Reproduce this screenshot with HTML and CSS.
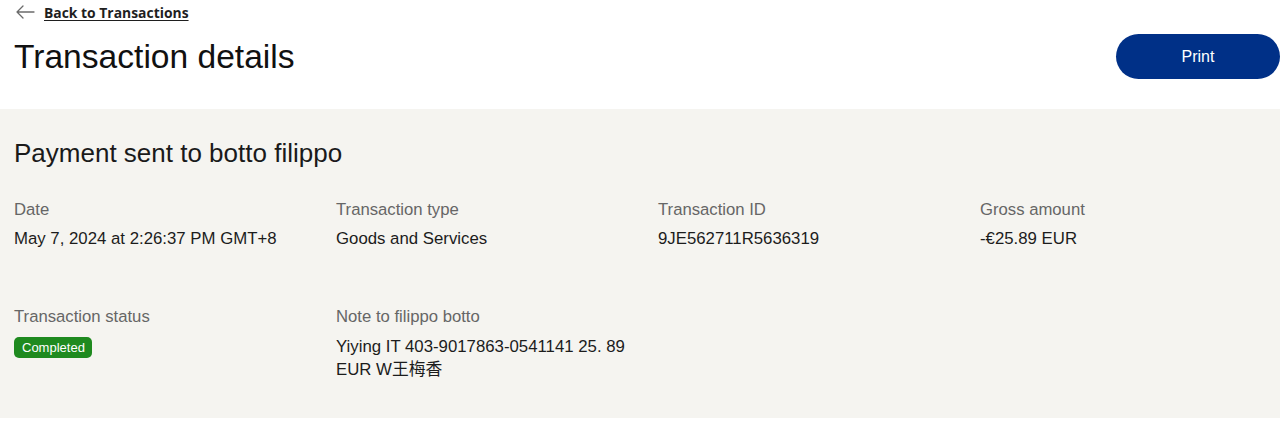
FILE: index.html
```html
<!DOCTYPE html>
<html lang="en">
<head>
<meta charset="utf-8">
<title>Transaction details</title>
<link rel="stylesheet" href="styles.css">
</head>
<body>
<header class="page-head">
  <a class="back" href="#">
    <svg class="back-icon" width="20" height="14" viewBox="0 0 20 14" aria-hidden="true">
      <path d="M19 7H2M8 1L2 7l6 6" fill="none" stroke="#6b6b6b" stroke-width="1.3" stroke-linecap="round" stroke-linejoin="round"/>
    </svg>
    <span class="back-text">Back to Transactions</span>
  </a>
  <div class="title-row">
    <h1 class="title">Transaction details</h1>
    <button class="print-btn" type="button">Print</button>
  </div>
</header>
<section class="panel">
  <h2 class="subtitle">Payment sent to botto filippo</h2>
  <div class="grid">
    <div class="field">
      <div class="label">Date</div>
      <div class="value">May 7, 2024 at 2:26:37 PM GMT+8</div>
    </div>
    <div class="field">
      <div class="label">Transaction type</div>
      <div class="value">Goods and Services</div>
    </div>
    <div class="field">
      <div class="label">Transaction ID</div>
      <div class="value">9JE562711R5636319</div>
    </div>
    <div class="field">
      <div class="label">Gross amount</div>
      <div class="value">-€25.89 EUR</div>
    </div>
    <div class="field">
      <div class="label">Transaction status</div>
      <div class="value status"><span class="badge">Completed</span></div>
    </div>
    <div class="field">
      <div class="label">Note to filippo botto</div>
      <div class="value note">Yiying IT 403-9017863-0541141 25. 89<br>EUR W王梅香</div>
    </div>
  </div>
</section>
</body>
</html>
```

FILE: styles.css
```css
html, body {
  margin: 0;
  padding: 0;
  background: #ffffff;
}
body {
  font-family: "Liberation Sans", Arial, "Noto Sans CJK SC", sans-serif;
  color: #1a1a1a;
}
.page-head {
  padding: 0 0 0 14px;
}
.back {
  display: inline-flex;
  align-items: center;
  gap: 9px;
  height: 24px;
  color: #1a1a1a;
  text-decoration: none;
}
.back-icon {
  display: block;
  margin-left: 1px;
}
.back-text {
  font-family: "Open Sans", "Liberation Sans", sans-serif;
  font-weight: 700;
  font-size: 13.9px;
  text-decoration: underline;
  text-underline-offset: 2px;
  color: #1f1f1f;
}
.title-row {
  display: flex;
  align-items: center;
  justify-content: space-between;
  margin-top: 10px;
  margin-bottom: 30px;
}
.title {
  margin: 0;
  font-weight: 400;
  font-size: 33.6px;
  line-height: 40px;
  color: #111111;
}
.print-btn {
  width: 164px;
  height: 45px;
  border: none;
  border-radius: 23px;
  background: #003087;
  color: #ffffff;
  font-family: "Liberation Sans", Arial, sans-serif;
  font-size: 16px;
  padding: 0;
}
.panel {
  background: #f5f4f0;
  padding: 28px 14px 37px;
}
.subtitle {
  margin: 0;
  font-weight: 400;
  font-size: 26px;
  line-height: 32px;
  color: #1a1a1a;
}
.grid {
  display: grid;
  grid-template-columns: repeat(4, 322px);
  row-gap: 56px;
  margin-top: 30px;
}
.label {
  font-size: 16.7px;
  line-height: 22px;
  color: #666666;
}
.value {
  margin-top: 7px;
  font-size: 16.8px;
  line-height: 22px;
  color: #1c1c1c;
}
.value.status {
  margin-top: 9px;
}
.note {
  line-height: 23px;
}
.badge {
  display: inline-block;
  background: #1f8a1f;
  color: #ffffff;
  font-size: 13px;
  line-height: 21px;
  padding: 0 7px 0 8px;
  border-radius: 5px;
  vertical-align: top;
}
```
